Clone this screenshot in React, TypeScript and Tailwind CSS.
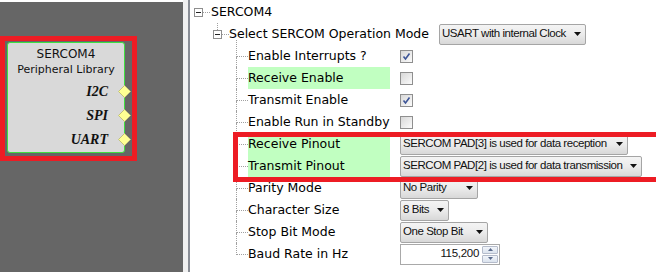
import React from 'react';

const tree = 'border-dotted border-[#a0a0a0]';

function Diamond() {
  return (
    <svg width="13" height="13" viewBox="0 0 13 13" className="-mr-[7px] ml-[10px] shrink-0">
      <polygon points="6.5,0.5 12.5,6.5 6.5,12.5 0.5,6.5" fill="#ffff94" stroke="#c2c27a" />
    </svg>
  );
}

function MinusBox() {
  return (
    <div className="w-[9px] h-[9px] border border-[#8e8e8e] bg-white flex items-center justify-center shrink-0">
      <div className="w-[5px] h-px bg-[#222]" />
    </div>
  );
}

function Arrow() {
  return (
    <svg width="7" height="4" viewBox="0 0 7 4" className="shrink-0">
      <polygon points="0,0 7,0 3.5,4" fill="#111" />
    </svg>
  );
}

function Combo({ text, w }: { text: string; w: string }) {
  return (
    <div
      className={`${w} h-[21px] border border-[#a5a5a5] rounded-[2px] bg-linear-to-b from-[#f4f4f4] via-[#ebebeb] to-[#d8d8d8] flex items-center pl-[2px] pr-[4px] text-[11.5px] tracking-[-0.45px] text-[#111] font-['Liberation_Sans',sans-serif]`}
    >
      <span className="flex-1 whitespace-nowrap leading-none">{text}</span>
      <Arrow />
    </div>
  );
}

function CheckBox({ checked }: { checked?: boolean }) {
  return (
    <div className="w-[13px] h-[13px] border border-[#8f8f8f] bg-linear-to-br from-[#d8d8d8] to-[#fbfbfb] flex items-center justify-center">
      {checked && (
        <svg width="9" height="9" viewBox="0 0 9 9">
          <path d="M1.5 4.5 L3.5 7 L7.5 1.5" fill="none" stroke="#3d5597" strokeWidth="1.6" />
        </svg>
      )}
    </div>
  );
}

function SpinBox() {
  return (
    <div className="w-[100px] h-[21px] border border-[#a9a9a9] bg-white flex items-center pr-[1px] text-[11.5px] tracking-[-0.3px] font-['Liberation_Sans',sans-serif] text-[#111]">
      <span className="flex-1 text-right pr-[3px]">115,200</span>
      <div className="w-[16px] h-[17px] flex flex-col gap-px">
        <div className="flex-1 border border-[#b5bccb] rounded-[1px] bg-linear-to-b from-[#f2f5fa] to-[#dbe3ee] flex items-center justify-center">
          <svg width="5" height="3" viewBox="0 0 5 3"><polygon points="0,3 5,3 2.5,0" fill="#5a6b8c" /></svg>
        </div>
        <div className="flex-1 border border-[#b5bccb] rounded-[1px] bg-linear-to-b from-[#f2f5fa] to-[#dbe3ee] flex items-center justify-center">
          <svg width="5" height="3" viewBox="0 0 5 3"><polygon points="0,0 5,0 2.5,3" fill="#5a6b8c" /></svg>
        </div>
      </div>
    </div>
  );
}

type Row = { label: string; green?: boolean; control: React.ReactNode };

const rows: Row[] = [
  { label: 'Enable Interrupts ?', control: <CheckBox checked /> },
  { label: 'Receive Enable', green: true, control: <CheckBox /> },
  { label: 'Transmit Enable', control: <CheckBox checked /> },
  { label: 'Enable Run in Standby', control: <CheckBox /> },
  { label: 'Receive Pinout', green: true, control: <Combo text="SERCOM PAD[3] is used for data reception" w="w-[228px]" /> },
  { label: 'Transmit Pinout', green: true, control: <Combo text="SERCOM PAD[2] is used for data transmission" w="w-[242px]" /> },
  { label: 'Parity Mode', control: <Combo text="No Parity" w="w-[78px]" /> },
  { label: 'Character Size', control: <Combo text="8 Bits" w="w-[49px]" /> },
  { label: 'Stop Bit Mode', control: <Combo text="One Stop Bit" w="w-[88px]" /> },
  { label: 'Baud Rate in Hz', control: <SpinBox /> },
];

export default function App() {
  return (
    <div className="w-[656px] h-[272px] flex overflow-hidden bg-white font-['DejaVu_Sans',sans-serif] text-black">
      {/* Diagram canvas */}
      <div className="w-[183px] shrink-0 bg-[#666666] border-t-2 border-white">
        <div className="mt-[34px] w-[137px] h-[125px] border-[5px] border-[#ed1c24] pl-[2px] pt-[1px]">
          <div className="w-[118px] h-[111px] border border-[#3fe03f] rounded-[3px] bg-[#d9d9d9] pt-[3px] flex flex-col">
            <div className="h-[16px] flex items-center justify-center text-[12px] text-[#111]">SERCOM4</div>
            <div className="h-[17px] flex items-center justify-center text-[11px] text-[#111]">Peripheral Library</div>
            {['I2C', 'SPI', 'UART'].map((p) => (
              <div key={p} className="h-[24px] flex items-center justify-end">
                <span className="font-['Liberation_Serif',serif] font-bold italic text-[14px] text-[#111]">{p}</span>
                <Diamond />
              </div>
            ))}
          </div>
        </div>
      </div>

      {/* Splitter */}
      <div className="w-[5px] shrink-0 bg-[#f0f0f0]" />
      <div className="w-[2px] shrink-0 bg-[#8a8e96]" />

      {/* Property tree */}
      <div className="flex-1 relative pt-[1px] text-[12.5px]">
        <div className="h-[22px] pl-[4px] flex items-center">
          <MinusBox />
          <div className={`w-[7px] border-t ${tree}`} />
          <span className="ml-px">SERCOM4</span>
        </div>

        <div className="h-[22px] pl-[23px] flex">
          <div className="flex flex-col items-center w-[9px]">
            <div className={`h-[7px] border-l ${tree}`} />
            <MinusBox />
          </div>
          <div className={`w-[7px] self-center border-t ${tree}`} />
          <span className="w-[210px] self-center">Select SERCOM Operation Mode</span>
          <div className="self-center">
            <Combo text="USART with internal Clock" w="w-[147px]" />
          </div>
        </div>

        {rows.map((r, i) => {
          const first = i === 0;
          const last = i === rows.length - 1;
          return (
            <div key={r.label} className="h-[22px] flex">
              <div className={`ml-[46px] w-[12px] flex flex-col ${first ? '-mt-[5px]' : ''}`}>
                <div className={`${first ? 'h-[17px]' : 'h-[12px]'} border-l border-b ${tree}`} />
                {!last && <div className={`flex-1 border-l ${tree}`} />}
              </div>
              <div className={`w-[142px] flex items-center ${r.green ? 'bg-[#c1ffc1]' : ''}`}>
                <span className="whitespace-nowrap">{r.label}</span>
              </div>
              <div className="ml-[10px] flex items-center">{r.control}</div>
            </div>
          );
        })}

        {/* Annotation */}
        <div className="absolute left-[43px] top-[132px] w-[430px] h-[50px] border-[5px] border-[#ed1c24] pointer-events-none" />
      </div>
    </div>
  );
}
